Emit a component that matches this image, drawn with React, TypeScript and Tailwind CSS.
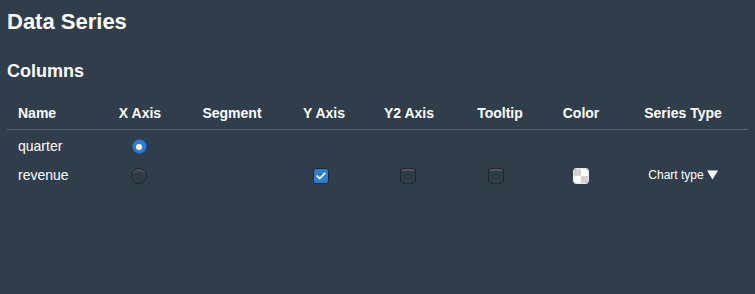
import React from 'react';

const cols = 'grid grid-cols-[87px_92px_92px_92px_78px_104px_58px_146px]';

function Radio({ checked }: { checked?: boolean }) {
  if (checked) {
    return (
      <span className="flex h-[15px] w-[15px] items-center justify-center rounded-full border border-[#1f5e9e] bg-[#2c7fd4]">
        <span className="h-[6px] w-[6px] rounded-full bg-white" />
      </span>
    );
  }
  return (
    <span className="block h-[16px] w-[16px] rounded-full border border-[#1e2831] bg-[#2e3c47] shadow-[inset_0_3px_0_-1px_#5a525c]" />
  );
}

function Checkbox({ checked }: { checked?: boolean }) {
  if (checked) {
    return (
      <span className="flex h-[16px] w-[16px] items-center justify-center rounded-[3px] border border-[#1d2a36] bg-[#2d7dcc]">
        <svg width="10" height="8" viewBox="0 0 10 8" fill="none">
          <path d="M1.2 4.2 L3.8 6.5 L8.8 1.3" stroke="white" strokeWidth="1.8" strokeLinecap="round" strokeLinejoin="round" />
        </svg>
      </span>
    );
  }
  return (
    <span className="block h-[16px] w-[16px] rounded-[3px] border border-[#1f2932] bg-[#2e3c47] shadow-[inset_0_3px_0_-1px_#5a5560]" />
  );
}

function Swatch() {
  return (
    <span className="grid h-[16px] w-[16px] grid-cols-2 grid-rows-2 overflow-hidden rounded-[3px] border border-[#e8e8e8]">
      <span className="bg-[#d2d2d2]" />
      <span className="bg-white" />
      <span className="bg-white" />
      <span className="bg-[#d2d2d2]" />
    </span>
  );
}

export default function App() {
  const headers = ['X Axis', 'Segment', 'Y Axis', 'Y2 Axis', 'Tooltip', 'Color', 'Series Type'];

  return (
    <div className="min-h-screen overflow-hidden bg-[#2f3e4a] px-[7px] pt-[9px] font-['Liberation_Sans',Arial,sans-serif] text-white">
      <h1 className="text-[22px] font-bold leading-[26px]">Data Series</h1>
      <h2 className="mt-[25px] text-[18px] font-bold leading-[22px]">Columns</h2>

      <div className="mt-[21px] w-[741px]">
        {/* header */}
        <div className="border-b border-[#56646f] pb-[6px]">
          <div className={`${cols} text-[14px] font-bold leading-[20px]`}>
            <div className="pl-[11px]">Name</div>
            {headers.map((h) => (
              <div key={h} className="text-center">{h}</div>
            ))}
          </div>
        </div>

        {/* rows */}
        <div className={`${cols} mt-[1px] h-[29px] items-center text-[14px] leading-[20px]`}>
          <div className="pl-[11px]">quarter</div>
          <div className="flex justify-center pr-[2px] pt-[2px]"><Radio checked /></div>
        </div>
        <div className={`${cols} h-[29px] items-center text-[14px] leading-[20px]`}>
          <div className="pl-[11px]">revenue</div>
          <div className="flex justify-center pr-[2px] pt-[2px]"><Radio /></div>
          <div />
          <div className="flex justify-center pr-[6px] pt-[2px]"><Checkbox checked /></div>
          <div className="flex justify-center pr-[2px] pt-[2px]"><Checkbox /></div>
          <div className="flex justify-center pr-[8px] pt-[2px]"><Checkbox /></div>
          <div className="flex justify-center pt-[2px]"><Swatch /></div>
          <div className="flex items-center justify-center gap-[3px] text-[12px]">
            <span>Chart type</span>
            <svg width="11" height="10" viewBox="0 0 11 10">
              <path d="M0 0.5 H11 L5.5 9.5 Z" fill="white" />
            </svg>
          </div>
        </div>
      </div>
    </div>
  );
}
